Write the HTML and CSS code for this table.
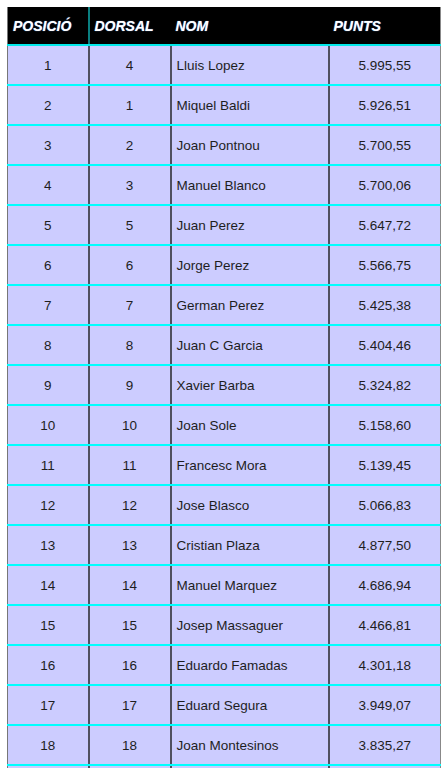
FILE: index.html
```html
<!DOCTYPE html>
<html>
<head>
<meta charset="utf-8">
<link rel="stylesheet" href="styles.css">
</head>
<body>
<table class="ranking">
  <colgroup>
    <col class="w-pos">
    <col class="w-dor">
    <col class="w-nom">
    <col class="w-pts">
  </colgroup>
  <thead>
    <tr>
      <th class="c-pos">POSICIÓ</th>
      <th class="c-dor">DORSAL</th>
      <th class="c-nom">NOM</th>
      <th class="c-pts">PUNTS</th>
    </tr>
  </thead>
  <tbody>
    <tr><td class="c-pos">1</td><td class="c-dor">4</td><td class="c-nom">Lluis Lopez</td><td class="c-pts">5.995,55</td></tr>
    <tr><td class="c-pos">2</td><td class="c-dor">1</td><td class="c-nom">Miquel Baldi</td><td class="c-pts">5.926,51</td></tr>
    <tr><td class="c-pos">3</td><td class="c-dor">2</td><td class="c-nom">Joan Pontnou</td><td class="c-pts">5.700,55</td></tr>
    <tr><td class="c-pos">4</td><td class="c-dor">3</td><td class="c-nom">Manuel Blanco</td><td class="c-pts">5.700,06</td></tr>
    <tr><td class="c-pos">5</td><td class="c-dor">5</td><td class="c-nom">Juan Perez</td><td class="c-pts">5.647,72</td></tr>
    <tr><td class="c-pos">6</td><td class="c-dor">6</td><td class="c-nom">Jorge Perez</td><td class="c-pts">5.566,75</td></tr>
    <tr><td class="c-pos">7</td><td class="c-dor">7</td><td class="c-nom">German Perez</td><td class="c-pts">5.425,38</td></tr>
    <tr><td class="c-pos">8</td><td class="c-dor">8</td><td class="c-nom">Juan C Garcia</td><td class="c-pts">5.404,46</td></tr>
    <tr><td class="c-pos">9</td><td class="c-dor">9</td><td class="c-nom">Xavier Barba</td><td class="c-pts">5.324,82</td></tr>
    <tr><td class="c-pos">10</td><td class="c-dor">10</td><td class="c-nom">Joan Sole</td><td class="c-pts">5.158,60</td></tr>
    <tr><td class="c-pos">11</td><td class="c-dor">11</td><td class="c-nom">Francesc Mora</td><td class="c-pts">5.139,45</td></tr>
    <tr><td class="c-pos">12</td><td class="c-dor">12</td><td class="c-nom">Jose Blasco</td><td class="c-pts">5.066,83</td></tr>
    <tr><td class="c-pos">13</td><td class="c-dor">13</td><td class="c-nom">Cristian Plaza</td><td class="c-pts">4.877,50</td></tr>
    <tr><td class="c-pos">14</td><td class="c-dor">14</td><td class="c-nom">Manuel Marquez</td><td class="c-pts">4.686,94</td></tr>
    <tr><td class="c-pos">15</td><td class="c-dor">15</td><td class="c-nom">Josep Massaguer</td><td class="c-pts">4.466,81</td></tr>
    <tr><td class="c-pos">16</td><td class="c-dor">16</td><td class="c-nom">Eduardo Famadas</td><td class="c-pts">4.301,18</td></tr>
    <tr><td class="c-pos">17</td><td class="c-dor">17</td><td class="c-nom">Eduard Segura</td><td class="c-pts">3.949,07</td></tr>
    <tr><td class="c-pos">18</td><td class="c-dor">18</td><td class="c-nom">Joan Montesinos</td><td class="c-pts">3.835,27</td></tr>
    <tr class="cut"><td class="c-pos"></td><td class="c-dor"></td><td class="c-nom"></td><td class="c-pts"></td></tr>
  </tbody>
</table>
</body>
</html>
```
FILE: styles.css
```css
html, body {
  margin: 0;
  padding: 0;
  background: #ffffff;
}
body {
  padding: 7px 0 0 7px;
  overflow: hidden;
  height: 768px;
  box-sizing: border-box;
}
.ranking {
  border-collapse: collapse;
  table-layout: fixed;
  width: 433px;
  font-family: "Liberation Sans", Arial, sans-serif;
  font-size: 13.5px;
  border-left: 1px solid #777777;
  border-right: 1px solid #888888;
}
.w-pos { width: 81px; }
.w-dor { width: 82px; }
.w-nom { width: 158px; }
.w-pts { width: 112px; }
.ranking th {
  background: #000000;
  color: #ffffff;
  font-size: 14px;
  font-weight: bold;
  font-style: italic;
  text-align: left;
  height: 37px;
  padding: 0 0 0 5px;
  border-bottom: 2px solid #00e8e8;
  text-shadow: 0 0 1px #6aa7ff;
}
.ranking th.c-pos {
  border-right: 2px solid #0a7f80;
}
.ranking td {
  background: #ccccff;
  color: #1e1e1e;
  height: 38px;
  padding: 0;
  border-bottom: 2px solid #00ffff;
  border-left: 2px solid #505060;
}
.ranking td:first-child {
  border-left: none;
}
.ranking td.c-pos,
.ranking td.c-dor,
.ranking td.c-pts {
  text-align: center;
}
.ranking td.c-nom {
  text-align: left;
  padding-left: 5px;
}
```
